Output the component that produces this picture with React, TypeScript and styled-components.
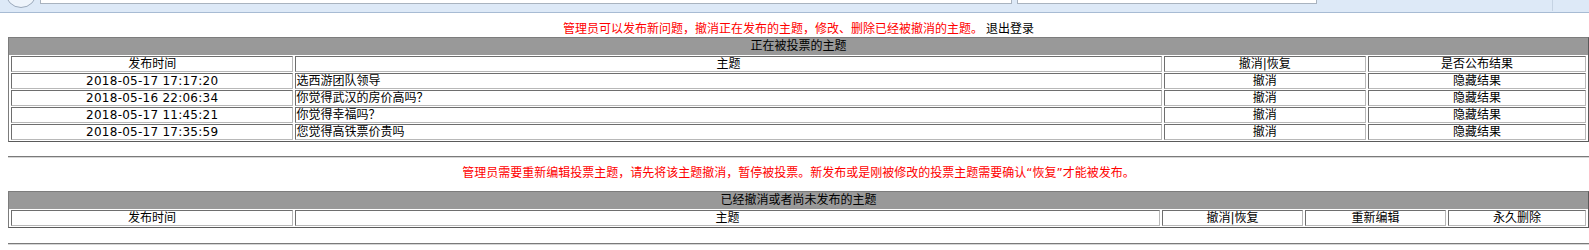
import React from 'react';
import styled, { createGlobalStyle } from 'styled-components';

type Topic = {
  time: string;
  title: string;
};

const GlobalStyle = createGlobalStyle`
  html, body {
    margin: 0;
    padding: 0;
    background: #ffffff;
  }
  body {
    font-family: "DejaVu Sans", "Noto Sans CJK SC", sans-serif;
    font-size: 12px;
    color: #000000;
  }
`;

const BrowserBar = styled.div`
  position: relative;
  height: 12px;
  background: #dde9f7;
  border-bottom: 1px solid #a7bbd3;
  overflow: hidden;
`;

const BackButton = styled.span`
  position: absolute;
  left: 5px;
  top: -24px;
  width: 30px;
  height: 30px;
  border-radius: 50%;
  border: 1px solid #9aa9bb;
  background: #eef4fb;
`;

const FieldBox = styled.span<{ $left: number; $width: number }>`
  position: absolute;
  top: -4px;
  left: ${(p) => p.$left}px;
  width: ${(p) => p.$width}px;
  height: 6px;
  border: 1px solid #a9b3bf;
  background: #ffffff;
`;

const Separator = styled.span`
  position: absolute;
  top: 0;
  left: 1552px;
  width: 1px;
  height: 11px;
  background: #c5d3e3;
`;

const Page = styled.div`
  padding: 9px 0 0 8px;
`;

const Notice = styled.p<{ $gap: number }>`
  margin: 0 0 ${(p) => p.$gap}px;
  text-align: center;
  line-height: 14px;
  color: #ff0000;
`;

const Logout = styled.a`
  color: #000000;
  text-decoration: none;
  margin-left: 3px;
  cursor: pointer;
`;

const Panel = styled.div`
  border-top: 1px solid #7c7c7c;
  border-left: 1px solid #7c7c7c;
  border-right: 1px solid #5a5a5a;
  border-bottom: 1px solid #5a5a5a;
`;

const PanelTitle = styled.div`
  height: 17px;
  line-height: 17px;
  background: #999999;
  text-align: center;
`;

const VoteTable = styled.table`
  width: 100%;
  table-layout: fixed;
  border-collapse: separate;
  border-spacing: 2px 1px;
`;

const Cell = styled.td<{ $align?: 'left' | 'center' }>`
  text-align: ${(p) => p.$align ?? 'center'};
  line-height: 14px;
  padding: 0;
  border-top: 1px solid #6e6e6e;
  border-left: 1px solid #6e6e6e;
  border-right: 1px solid #b8b8b8;
  border-bottom: 1px solid #b8b8b8;
  white-space: nowrap;
  overflow: hidden;
`;

const TimeCell = styled(Cell)`
  letter-spacing: 0.25px;
`;

const Divider = styled.hr<{ $top: number; $bottom: number }>`
  margin: ${(p) => p.$top}px 0 ${(p) => p.$bottom}px;
  height: 0;
  border: none;
  border-top: 1px solid #7a7a7a;
  border-bottom: 1px solid #d6d6d6;
`;

const topics: Topic[] = [
  { time: '2018-05-17 17:17:20', title: '选西游团队领导' },
  { time: '2018-05-16 22:06:34', title: '你觉得武汉的房价高吗？' },
  { time: '2018-05-17 11:45:21', title: '你觉得幸福吗？' },
  { time: '2018-05-17 17:35:59', title: '您觉得高铁票价贵吗' },
];

const PublishedPanel = () => (
  <Panel>
    <PanelTitle>正在被投票的主题</PanelTitle>
    <VoteTable>
      <colgroup>
        <col style={{ width: '18%' }} />
        <col style={{ width: '55.2%' }} />
        <col style={{ width: '12.9%' }} />
        <col style={{ width: '13.9%' }} />
      </colgroup>
      <tbody>
        <tr>
          <Cell>发布时间</Cell>
          <Cell>主题</Cell>
          <Cell>撤消|恢复</Cell>
          <Cell>是否公布结果</Cell>
        </tr>
        {topics.map((t) => (
          <tr key={t.time}>
            <TimeCell>{t.time}</TimeCell>
            <Cell $align="left">{t.title}</Cell>
            <Cell>撤消</Cell>
            <Cell>隐藏结果</Cell>
          </tr>
        ))}
      </tbody>
    </VoteTable>
  </Panel>
);

const CancelledPanel = () => (
  <Panel>
    <PanelTitle>已经撤消或者尚未发布的主题</PanelTitle>
    <VoteTable>
      <colgroup>
        <col style={{ width: '18%' }} />
        <col style={{ width: '55.2%' }} />
        <col style={{ width: '9%' }} />
        <col style={{ width: '9%' }} />
        <col style={{ width: '8.8%' }} />
      </colgroup>
      <tbody>
        <tr>
          <Cell>发布时间</Cell>
          <Cell>主题</Cell>
          <Cell>撤消|恢复</Cell>
          <Cell>重新编辑</Cell>
          <Cell>永久删除</Cell>
        </tr>
      </tbody>
    </VoteTable>
  </Panel>
);

export default function App() {
  return (
    <>
      <GlobalStyle />
      <BrowserBar>
        <BackButton />
        <FieldBox $left={40} $width={970} />
        <FieldBox $left={1017} $width={298} />
        <Separator />
      </BrowserBar>
      <Page>
        <Notice $gap={1}>
          管理员可以发布新问题，撤消正在发布的主题，修改、删除已经被撤消的主题。
          <Logout>退出登录</Logout>
        </Notice>
        <PublishedPanel />
        <Divider $top={14} $bottom={8} />
        <Notice $gap={11}>
          管理员需要重新编辑投票主题，请先将该主题撤消，暂停被投票。新发布或是刚被修改的投票主题需要确认“恢复”才能被发布。
        </Notice>
        <CancelledPanel />
        <Divider $top={15} $bottom={0} />
      </Page>
    </>
  );
}
